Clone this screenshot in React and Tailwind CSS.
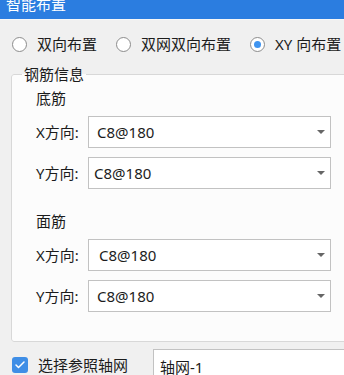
import { Check } from 'lucide-react';

const font = { fontFamily: '"Noto Sans", "Noto Sans CJK SC", sans-serif' };

function Radio({ label, checked }) {
  return (
    <label className="flex items-center gap-[10px]">
      <span className="w-[15px] h-[15px] rounded-full border border-[#8c8c8c] bg-white flex items-center justify-center">
        {checked && <span className="w-[7px] h-[7px] rounded-full bg-[#3f94f0]" />}
      </span>
      <span>{label}</span>
    </label>
  );
}

function Combo({ value, pad = 'pl-[8px]' }) {
  return (
    <div className={`w-[243px] h-[32px] border border-[#c2c2c2] bg-white flex items-center justify-between ${pad} pr-[5px]`}>
      <span>{value}</span>
      <span className="w-0 h-0 border-x-[4px] border-x-transparent border-t-[4px] border-t-[#666]" />
    </div>
  );
}

function Row({ label, value, pad }) {
  return (
    <div className="flex items-center">
      <span className="w-[52px]">{label}</span>
      <Combo value={value} pad={pad} />
    </div>
  );
}

export default function App() {
  return (
    <div className="w-[344px] h-[375px] overflow-hidden bg-[#f0f0f0] text-[15px] leading-[20px] text-[#1c1c1c]" style={font}>
      <div className="h-[19px] bg-[#2b7de0] overflow-hidden border-b border-[#f7f7f7] box-content">
        <div className="pl-[6px] -mt-[6px] text-white">智能布置</div>
      </div>

      <div className="flex items-center h-[20px] mt-[14px] pl-[12px] gap-[19px]">
        <Radio label="双向布置" />
        <Radio label="双网双向布置" />
        <Radio label="XY 向布置" checked />
      </div>

      <fieldset className="ml-[11px] mt-[10px] w-[345px] border border-[#d8d8d8] rounded-[3px] bg-[#fcfcfc] pl-[10px] pr-0 pt-[4px] pb-[29px]">
        <legend className="px-[2px]">钢筋信息</legend>
        <div className="pl-[14px] flex flex-col">
          <div className="h-[20px]">底筋</div>
          <div className="mt-[8px] flex flex-col gap-[9px]">
            <Row label="X方向:" value="C8@180" />
            <Row label="Y方向:" value="C8@180" pad="pl-[5px]" />
          </div>
          <div className="h-[20px] mt-[22px]">面筋</div>
          <div className="mt-[8px] flex flex-col gap-[9px]">
            <Row label="X方向:" value="C8@180" pad="pl-[10px]" />
            <Row label="Y方向:" value="C8@180" />
          </div>
        </div>
      </fieldset>

      <div className="flex items-start mt-[7px] pl-[12px]">
        <span className="shrink-0 mt-[8px] w-[16px] h-[16px] rounded-[3px] bg-[#3f8ee6] flex items-center justify-center">
          <Check size={12} strokeWidth={3} color="white" />
        </span>
        <span className="shrink-0 ml-[10px] mt-[6px] w-[115px]">选择参照轴网</span>
        <div className="shrink-0 w-[200px] h-[34px] border border-[#c2c2c2] bg-white pl-[6px] pt-[7px]">轴网-1</div>
      </div>
    </div>
  );
}
